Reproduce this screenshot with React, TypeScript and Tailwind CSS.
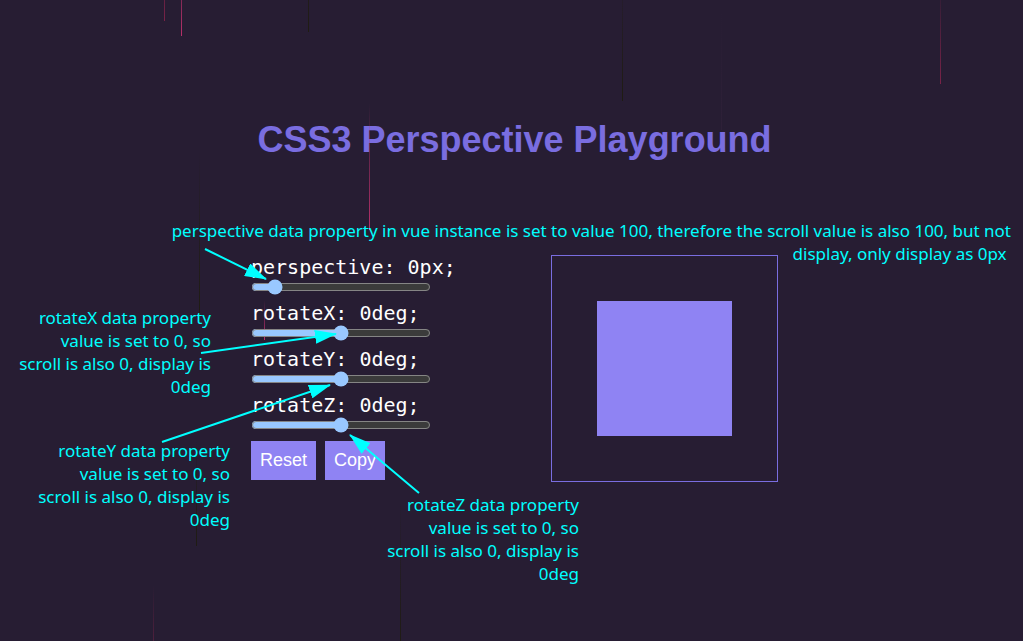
import { useState } from "react";

type Drop = { x: number; y: number; h: number; tone: "pink" | "red" | "dark" | "faint" };

const drops: Drop[] = [
  { x: 164, y: -60, h: 81, tone: "red" },
  { x: 181, y: -60, h: 96, tone: "pink" },
  { x: 308, y: -90, h: 122, tone: "dark" },
  { x: 369, y: 104, h: 126, tone: "pink" },
  { x: 622, y: -30, h: 131, tone: "dark" },
  { x: 940, y: -20, h: 104, tone: "red" },
  { x: 721, y: 10, h: 120, tone: "faint" },
  { x: 199, y: 150, h: 165, tone: "dark" },
  { x: 264, y: 300, h: 40, tone: "pink" },
  { x: 196, y: 440, h: 106, tone: "dark" },
  { x: 400, y: 500, h: 150, tone: "dark" },
  { x: 153, y: 585, h: 120, tone: "red" },
];

const toneColor = {
  pink: "#b8306a",
  red: "#7a2348",
  dark: "#1f1c12",
  faint: "#2e2038",
};

function Rain() {
  return (
    <svg className="pointer-events-none absolute inset-0 size-full" aria-hidden="true">
      <defs>
        {Object.entries(toneColor).map(([tone, color]) => (
          <linearGradient key={tone} id={`rain-${tone}`} x1="0" y1="0" x2="0" y2="1">
            <stop offset="0" stopColor={color} stopOpacity="0" />
            <stop offset="1" stopColor={color} />
          </linearGradient>
        ))}
      </defs>
      {drops.map((d) => (
        <rect key={d.x} x={d.x} y={d.y} width="1" height={d.h} fill={`url(#rain-${d.tone})`} />
      ))}
    </svg>
  );
}

type SliderProps = { name: string; unit: string; min: number; max: number; initial: number; base?: number };

function Slider({ name, unit, min, max, initial, base = 0 }: SliderProps) {
  const [value, setValue] = useState(initial);
  return (
    <div className="flex h-[46px] flex-col">
      <label htmlFor={name} className="h-6 whitespace-nowrap font-['DejaVu_Sans_Mono',monospace] text-[20px] leading-6 text-white">
        {name}: {value - base}
        {unit};
      </label>
      <input
        id={name}
        type="range"
        min={min}
        max={max}
        value={value}
        onChange={(e) => setValue(Number(e.target.value))}
        className="h-4 w-[180px] scheme-dark"
      />
    </div>
  );
}

function Arrow({ from, to }: { from: [number, number]; to: [number, number] }) {
  return (
    <line x1={from[0]} y1={from[1]} x2={to[0]} y2={to[1]} stroke="#00ffff" strokeWidth="2" markerEnd="url(#arrow-head)" />
  );
}

export default function App() {
  return (
    <main className="relative min-h-screen overflow-hidden bg-[#271d33] pt-[117px] pl-1.5 font-['Liberation_Sans',Arial,sans-serif]">
      <h1 className="text-center text-[36px] leading-[46px] font-bold text-[#7a6de0]">
        CSS3 Perspective Playground
      </h1>
      <Rain />

      <div className="relative mx-auto mt-[92px] flex w-[527px] justify-between">
        <section>
          <Slider name="perspective" unit="px" min={0} max={999} initial={100} base={100} />
          <Slider name="rotateX" unit="deg" min={-180} max={180} initial={0} />
          <Slider name="rotateY" unit="deg" min={-180} max={180} initial={0} />
          <Slider name="rotateZ" unit="deg" min={-180} max={180} initial={0} />
          <div className="mt-0.5 flex gap-[9px] text-[18px] text-white">
            <button type="button" className="h-[39px] bg-[#8f83f3] px-[9px]">Reset</button>
            <button type="button" className="h-[39px] bg-[#8f83f3] px-[9px]">Copy</button>
          </div>
        </section>

        <section className="self-start border border-[#7a6de0] p-[45px]">
          <div className="size-[135px] bg-[#8f83f3]" />
        </section>

        <div className="pointer-events-none absolute inset-0 text-right font-['Noto_Sans',sans-serif] text-[17px] leading-[23px] text-[#00ffff]">
          <p className="absolute -top-9 right-[-233px] whitespace-nowrap">
            perspective data property in vue instance is set to value 100, therefore the scroll value is also 100, but not
            <br />
            display, only display as 0px&nbsp;
          </p>
          <p className="absolute top-[51px] -left-10 w-[200px] -translate-x-full">
            rotateX data property value is set to 0, so scroll&nbsp;is also 0, display is 0deg
          </p>
          <p className="absolute top-[184px] -left-[21px] w-[200px] -translate-x-full">
            rotateY data property value is set to 0, so scroll&nbsp;is also 0, display is 0deg
          </p>
          <p className="absolute top-[238px] left-[328px] w-[200px] -translate-x-full">
            rotateZ data property value is set to 0, so scroll&nbsp;is also 0, display is 0deg
          </p>
          <svg className="absolute inset-0 size-full overflow-visible" aria-hidden="true">
            <defs>
              <marker id="arrow-head" markerUnits="userSpaceOnUse" markerWidth="22" markerHeight="14" refX="21" refY="7" orient="auto">
                <path d="M0 0L22 7L0 14Z" fill="#00ffff" />
              </marker>
            </defs>
            <Arrow from={[-46, -6]} to={[15, 24]} />
            <Arrow from={[-50, 98]} to={[85, 79]} />
            <Arrow from={[-89, 187]} to={[79, 130]} />
            <Arrow from={[168, 238]} to={[99, 180]} />
          </svg>
        </div>
      </div>
    </main>
  );
}
